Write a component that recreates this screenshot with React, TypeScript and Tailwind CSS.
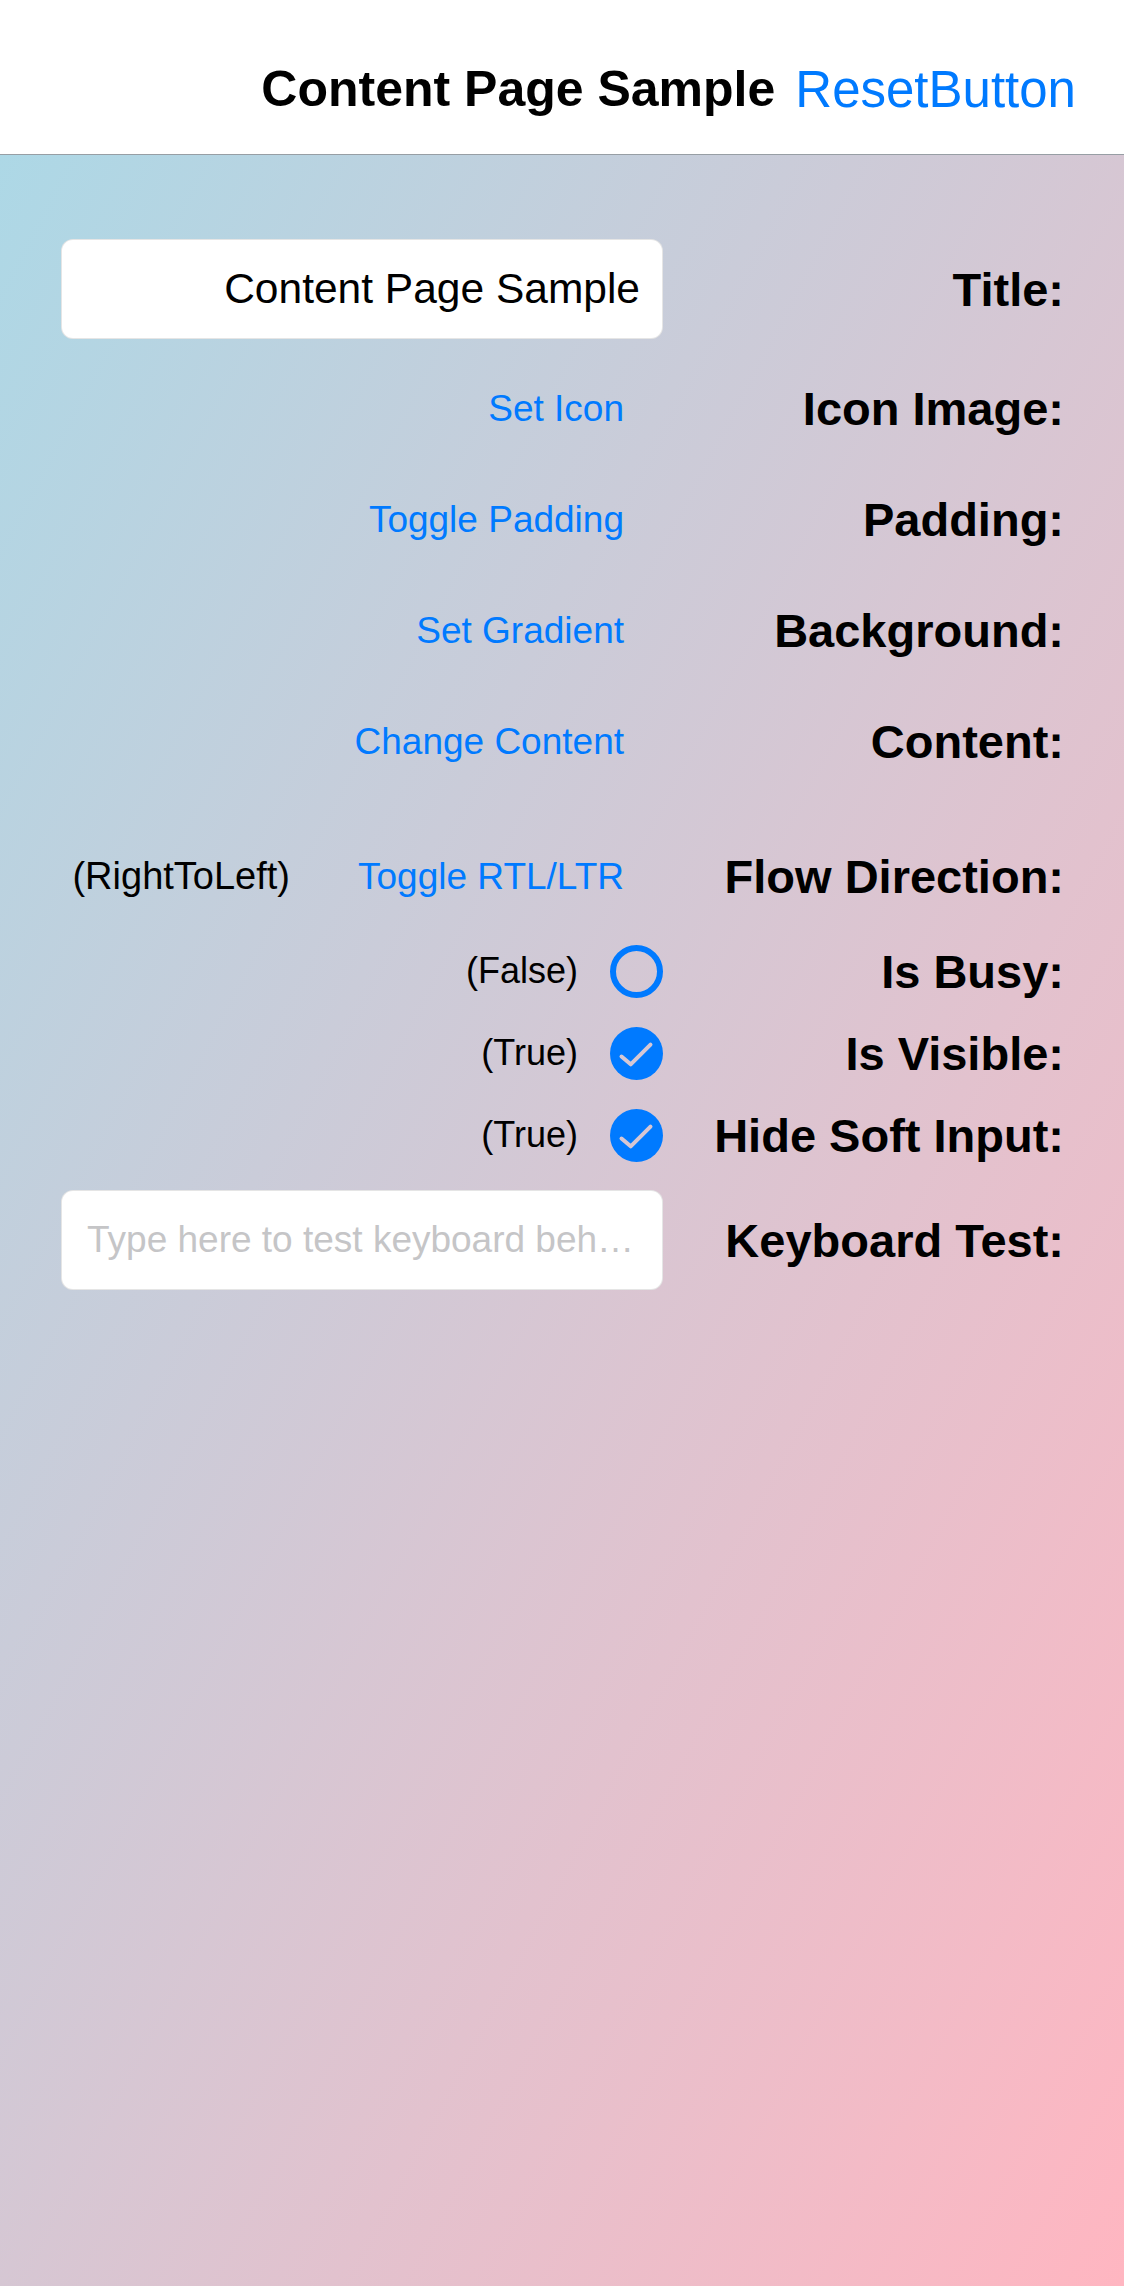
import { FC, ReactNode } from "react";

type RowProps = {
  label: string;
  className: string;
  children: ReactNode;
};

// one form line: control on the left, bold caption on the right (RTL layout)
const Row: FC<RowProps> = ({ label, className, children }) => (
  <div className={`grid grid-cols-[602px_401px] items-center ${className}`}>
    <div className="flex h-full items-center justify-end">{children}</div>
    <div className="text-right text-[47px] font-bold leading-none text-black">
      {label}
    </div>
  </div>
);

const LinkButton: FC<{ text: string }> = ({ text }) => (
  <button type="button" className="pr-[39px] text-[37px] leading-none text-[#007AFF]">
    {text}
  </button>
);

const CheckCircle: FC<{ checked: boolean; id: string }> = ({ checked, id }) =>
  checked ? (
    <svg width="53" height="53" viewBox="0 0 53 53">
      <mask id={id}>
        <rect width="53" height="53" fill="white" />
        <path
          d="M11.5 29.5 L20.7 37.3 L40.5 17.7"
          fill="none"
          stroke="black"
          strokeWidth="4"
          strokeLinecap="round"
          strokeLinejoin="round"
        />
      </mask>
      <circle cx="26.5" cy="26.5" r="26.5" fill="#007AFF" mask={`url(#${id})`} />
    </svg>
  ) : (
    <svg width="53" height="53" viewBox="0 0 53 53">
      <circle cx="26.5" cy="26.5" r="23.5" fill="none" stroke="#007AFF" strokeWidth="6" />
    </svg>
  );

const Toggle: FC<{ value: boolean; id: string }> = ({ value, id }) => (
  <div className="flex items-center gap-[32px]">
    <span className="text-[36px] leading-none text-black">
      ({value ? "True" : "False"})
    </span>
    <CheckCircle checked={value} id={id} />
  </div>
);

export default function App() {
  return (
    <div className="flex min-h-screen flex-col font-['Liberation_Sans',Arial,sans-serif]">
      {/* navigation bar */}
      <header className="flex h-[155px] shrink-0 items-center justify-end gap-[20px] border-b border-[#979ea4] bg-white pr-[48px] pt-[24px]">
        <h1 className="text-[50px] font-bold leading-none text-black">
          Content Page Sample
        </h1>
        <button type="button" className="text-[51px] leading-none text-[#007AFF]">
          ResetButton
        </button>
      </header>

      <main className="flex-1 bg-[linear-gradient(to_bottom_right,#ADD8E6,#FFB6C1)] pl-[61px] pt-[84px]">
        <Row label="Title:" className="h-[100px]">
          <div className="flex h-full w-full items-center justify-end rounded-[12px] border border-black/10 bg-white pr-[22px] text-[42.5px] leading-none text-black">
            Content Page Sample
          </div>
        </Row>

        <Row label="Icon Image:" className="mt-[27px] h-[84px]">
          <LinkButton text="Set Icon" />
        </Row>

        <Row label="Padding:" className="mt-[27px] h-[84px]">
          <LinkButton text="Toggle Padding" />
        </Row>

        <Row label="Background:" className="mt-[27px] h-[84px]">
          <LinkButton text="Set Gradient" />
        </Row>

        <Row label="Content:" className="mt-[27px] h-[84px]">
          <LinkButton text="Change Content" />
        </Row>

        <Row label="Flow Direction:" className="mt-[51px] h-[84px]">
          <span className="mr-[68px] text-[38px] leading-none text-black">
            (RightToLeft)
          </span>
          <LinkButton text="Toggle RTL/LTR" />
        </Row>

        <Row label="Is Busy:" className="mt-[23px] h-[60px]">
          <Toggle value={false} id="busy" />
        </Row>

        <Row label="Is Visible:" className="mt-[22px] h-[60px]">
          <Toggle value={true} id="visible" />
        </Row>

        <Row label="Hide Soft Input:" className="mt-[22px] h-[60px]">
          <Toggle value={true} id="soft" />
        </Row>

        <Row label="Keyboard Test:" className="mt-[25px] h-[100px]">
          <input
            type="text"
            placeholder="Type here to test keyboard behavior"
            className="h-full w-full overflow-hidden text-ellipsis rounded-[12px] border border-black/10 bg-white pl-[25px] pr-[14px] text-[37px] text-black outline-none placeholder:text-[#c5c5c7]"
          />
        </Row>
      </main>
    </div>
  );
}
